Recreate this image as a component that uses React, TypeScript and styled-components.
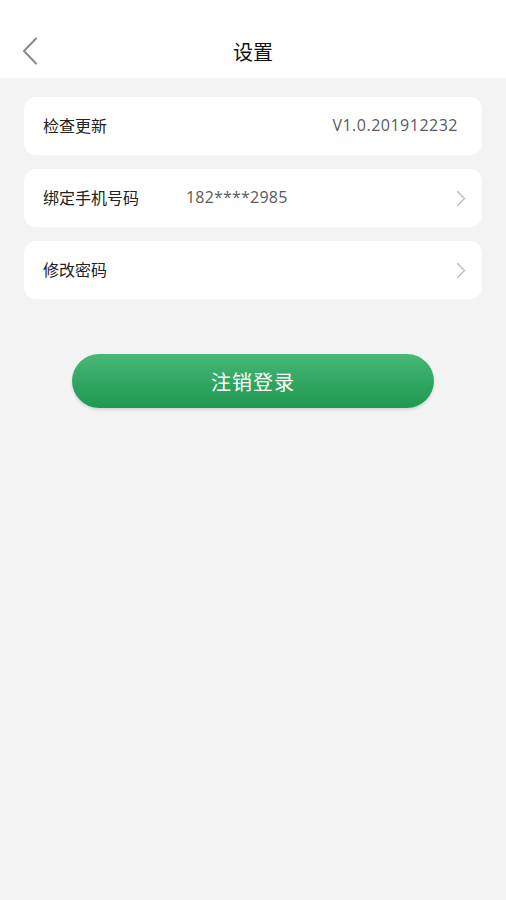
import styled, { createGlobalStyle } from 'styled-components';

const GlobalStyle = createGlobalStyle`
  html, body {
    margin: 0;
    padding: 0;
    background: #f3f3f3;
  }
  body {
    font-family: "Noto Sans CJK SC", "Noto Sans", sans-serif;
  }
`;

type RowItem = {
  label: string;
  value?: string;
  valueAlign?: 'left' | 'right';
  arrow?: boolean;
};

const rows: RowItem[] = [
  { label: '检查更新', value: 'V1.0.201912232', valueAlign: 'right' },
  { label: '绑定手机号码', value: '182****2985', valueAlign: 'left', arrow: true },
  { label: '修改密码', arrow: true },
];

function BackIcon() {
  return (
    <svg width="18" height="28" viewBox="0 0 18 28" fill="none">
      <path d="M15 1.5L3 14l12 12.5" stroke="#8a8a8a" strokeWidth="2" strokeLinecap="round" strokeLinejoin="round" />
    </svg>
  );
}

function ArrowIcon() {
  return (
    <svg width="10" height="17" viewBox="0 0 10 17" fill="none">
      <path d="M1.5 1.5L8.5 8.5L1.5 15.5" stroke="#bdbdbd" strokeWidth="1.4" strokeLinecap="round" strokeLinejoin="round" />
    </svg>
  );
}

export default function App() {
  return (
    <Page>
      <GlobalStyle />
      <Header>
        <BackButton aria-label="返回">
          <BackIcon />
        </BackButton>
        <Title>设置</Title>
      </Header>

      <List>
        {rows.map((row) => (
          <Card key={row.label}>
            <Label>{row.label}</Label>
            {row.value && <Value $align={row.valueAlign ?? 'right'}>{row.value}</Value>}
            {!row.value && <Spacer />}
            {row.arrow && (
              <Arrow>
                <ArrowIcon />
              </Arrow>
            )}
          </Card>
        ))}
      </List>

      <ButtonWrap>
        <LogoutButton>注销登录</LogoutButton>
      </ButtonWrap>
    </Page>
  );
}

/* ===== styles ===== */

const Page = styled.div`
  min-height: 900px;
  background: #f3f3f3;
`;

const Header = styled.header`
  position: relative;
  height: 78px;
  background: #ffffff;
  display: flex;
  align-items: flex-end;
  justify-content: center;
  padding-bottom: 12px;
  box-sizing: border-box;
`;

const BackButton = styled.button`
  position: absolute;
  left: 21px;
  top: 37px;
  padding: 0;
  border: none;
  background: none;
  display: flex;
`;

const Title = styled.h1`
  margin: 0;
  font-size: 20px;
  font-weight: 400;
  color: #111;
  line-height: 28px;
`;

const List = styled.div`
  display: flex;
  flex-direction: column;
  gap: 14px;
  padding: 19px 24px 0;
`;

const Card = styled.div`
  height: 58px;
  background: #ffffff;
  border-radius: 12px;
  display: flex;
  align-items: center;
  padding: 0 16px 0 19px;
`;

const Label = styled.span`
  width: 143px;
  flex-shrink: 0;
  font-size: 16px;
  color: #222;
  margin-top: -2px;
`;

const Value = styled.span<{ $align: 'left' | 'right' }>`
  flex: 1;
  font-family: "Open Sans", "Noto Sans", sans-serif;
  font-size: 16px;
  color: #5a5a5a;
  letter-spacing: ${(p) => (p.$align === 'right' ? '0.5px' : '0.2px')};
  text-align: ${(p) => p.$align};
  padding-right: ${(p) => (p.$align === 'right' ? '8px' : '0')};
  margin-top: -2px;
`;

const Spacer = styled.span`
  flex: 1;
`;

const Arrow = styled.span`
  display: flex;
`;

const ButtonWrap = styled.div`
  display: flex;
  justify-content: center;
  padding-top: 55px;
`;

const LogoutButton = styled.button`
  width: 362px;
  height: 54px;
  border: none;
  border-radius: 27px;
  background: linear-gradient(180deg, #48b878 0%, #2ea35f 60%, #1f9952 100%);
  box-shadow: 0 2px 3px rgba(0, 0, 0, 0.12);
  color: #ffffff;
  font-family: "Noto Sans CJK SC", sans-serif;
  font-size: 20px;
  letter-spacing: 1px;
`;
